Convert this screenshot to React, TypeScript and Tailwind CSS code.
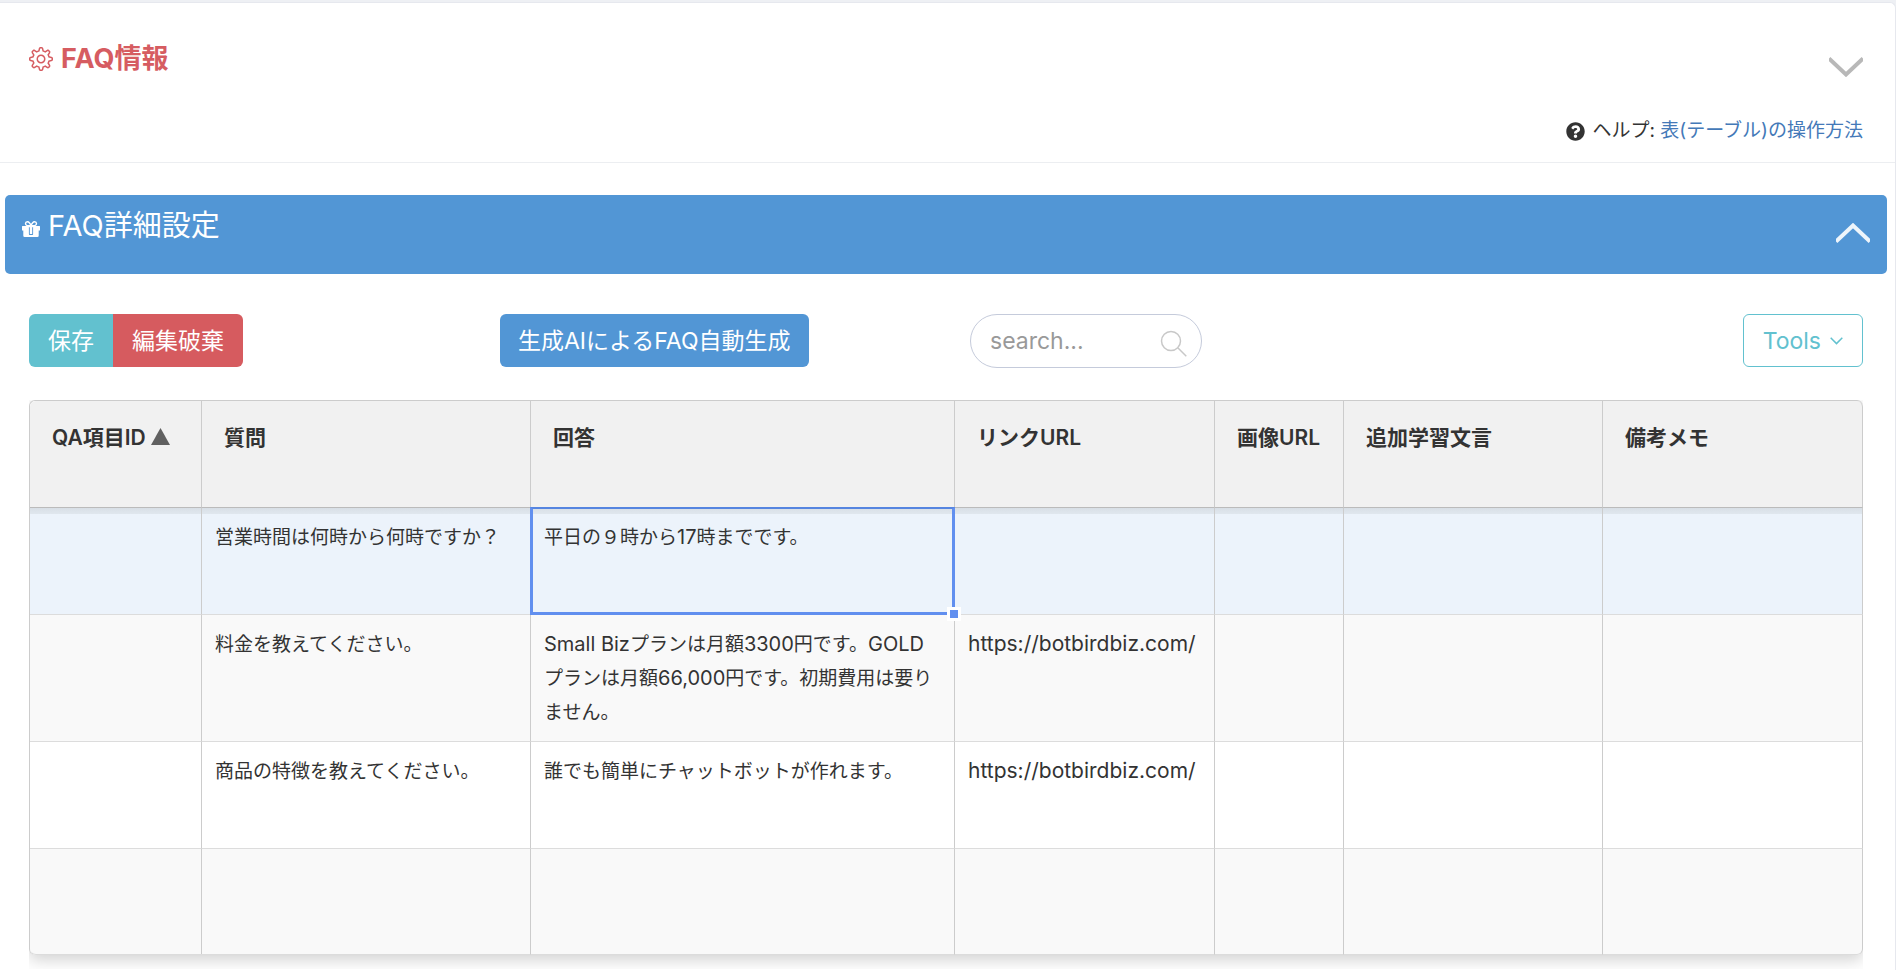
import { SlSettings } from "react-icons/sl";
import { FaQuestionCircle } from "react-icons/fa";

const columns = [
  { label: "QA項目ID", width: "w-[172px]", sorted: true },
  { label: "質問", width: "w-[329px]" },
  { label: "回答", width: "w-[424px]" },
  { label: "リンクURL", width: "w-[260px]" },
  { label: "画像URL", width: "w-[129px]" },
  { label: "追加学習文言", width: "w-[259px]" },
  { label: "備考メモ", width: "w-[260px]" },
];

const rows = [
  ["", "営業時間は何時から何時ですか？", "平日の９時から17時までです。", "", "", "", ""],
  [
    "",
    "料金を教えてください。",
    "Small Bizプランは月額3300円です。GOLDプランは月額66,000円です。初期費用は要りません。",
    "https://botbirdbiz.com/",
    "",
    "",
    "",
  ],
  ["", "商品の特徴を教えてください。", "誰でも簡単にチャットボットが作れます。", "https://botbirdbiz.com/", "", "", ""],
  ["", "", "", "", "", "", ""],
];

const rowColors = [
  "bg-[linear-gradient(to_bottom,#d8dfe6_0px,#e0e7ee_6px,#ecf3fb_6px)]",
  "bg-[#f9f9f9]",
  "bg-white",
  "bg-[#f9f9f9]",
];

function GiftIcon() {
  return (
    <svg viewBox="0 0 18 16" className="mt-[5px] h-4 w-[18px]" fill="currentColor" aria-hidden="true">
      <path
        fillRule="evenodd"
        d="M0 5.500Q0 5 .5 5H4.500Q2.800 4.500 2.800 2.600Q2.900 .2 5.400 .1Q7 .1 8 1.500L9 2.800L10 1.500Q11 .1 12.600 .1Q15.100 .2 15.200 2.600Q15.200 4.500 13.500 5H17.500Q18 5 18 5.500V9.500H16.700V14.700Q16.700 16 15.400 16H2.600Q1.300 16 1.300 14.700V9.500H0ZM5.400 1.400Q4.200 1.500 4.200 2.600Q4.200 3.900 5.400 3.900H8L6.800 2.200Q6.200 1.400 5.400 1.400ZM12.600 1.400Q11.800 1.400 11.200 2.200L10 3.900H12.600Q13.800 3.900 13.800 2.600Q13.800 1.500 12.600 1.400ZM6.900 6.300V13.300Q6.900 14 7.600 14H10.400Q11.100 14 11.100 13.300V6.300H10.200V13H7.800V6.300Z"
      />
    </svg>
  );
}

function Chevron({ up = false }: { up?: boolean }) {
  return (
    <svg viewBox="0 0 34 20" className="block h-5 w-[34px]" fill="none" stroke="currentColor" strokeWidth="4" aria-hidden="true">
      <path d={up ? "M0 18.500L17 2.500L34 18.500" : "M0 1.500L17 17.500L34 1.500"} />
    </svg>
  );
}

/* Latin letters and digits are set slightly larger to balance with the kanji. */
function CellText({ text }: { text: string }) {
  return text.split(/([!-~][ -~]*)/).map((part, i) =>
    i % 2 === 1 ? (
      <span key={i} className={part.startsWith("http") ? "text-[21px] leading-none" : "text-[20px] leading-none"}>
        {part}
      </span>
    ) : (
      part
    ),
  );
}

export default function App() {
  return (
    <div
      lang="ja"
      className="min-h-screen bg-[#eef0f4] pt-[2px] font-['Inter','Noto_Sans_CJK_JP',sans-serif] text-[19px] leading-[34px] text-[#333]"
    >
      <main className="min-h-[calc(100vh-2px)] rounded-tr-md border-t border-r border-[#e6e8ee] bg-white">
        <header className="flex h-[160px] items-start justify-between border-b border-[#eceef1] pr-8 pl-[29px]">
          <h1 className="flex items-center gap-2 pt-[39px] text-[27px] font-bold text-[#d65c61]">
            <SlSettings className="size-6" aria-hidden="true" />
            FAQ情報
          </h1>
          <div className="flex flex-col items-end gap-[37px] pt-[54px]">
            <button type="button" aria-label="FAQ情報を開く" className="text-[#b8b8b8]">
              <Chevron />
            </button>
            <p className="flex items-center">
              <FaQuestionCircle className="mr-[7px] size-[19px]" aria-hidden="true" />
              <span>ヘルプ:&nbsp;</span>
              <a href="#help" className="text-[#4479b8]">
                表(テーブル)の操作方法
              </a>
            </p>
          </div>
        </header>

        <section>
          <div className="mt-8 mr-2 ml-[5px] flex h-[79px] items-start justify-between rounded-[5px] bg-[#5296d5] px-[17px] text-white">
            <h2 className="flex items-center gap-2 pt-[14px] text-[29px] font-normal">
              <GiftIcon />
              FAQ詳細設定
            </h2>
            <button type="button" aria-label="FAQ詳細設定を閉じる" className="pt-7 text-white/90">
              <Chevron up />
            </button>
          </div>

          <div className="mt-10 grid grid-cols-[471fr_470fr_470fr_423fr] items-start pr-8 pl-[29px] text-[23px]">
            <div className="flex text-white">
              <button type="button" className="h-[53px] rounded-l-md bg-[#62c1cf] px-[19px]">
                保存
              </button>
              <button type="button" className="h-[53px] rounded-r-md bg-[#d65b5f] px-[19px]">
                編集破棄
              </button>
            </div>
            <button type="button" className="h-[53px] justify-self-start rounded-md bg-[#5296d5] px-[18px] text-white">
              生成AIによるFAQ自動生成
            </button>
            <div className="flex h-[54px] w-[232px] items-center rounded-full border border-[#c5cbdb] pr-[14px] pl-[19px]">
              <input
                type="text"
                aria-label="検索"
                placeholder="search..."
                className="h-[50px] w-0 min-w-0 flex-1 bg-transparent outline-none placeholder:text-[#999]"
              />
              <svg viewBox="0 0 27 27" className="mt-1 size-[27px]" fill="none" stroke="#c8c8c8" strokeWidth="1.5" aria-hidden="true">
                <circle cx="11" cy="11" r="9.500" />
                <path d="M18 18L26.300 26.300" />
              </svg>
            </div>
            <button
              type="button"
              className="flex h-[53px] items-center gap-[9px] justify-self-end rounded-md border border-[#62c1cf] px-[19px] text-[#62c1cf]"
            >
              Tools
              <svg viewBox="0 0 13 8" className="h-2 w-[13px]" fill="none" stroke="currentColor" strokeWidth="1.5" aria-hidden="true">
                <path d="M.7 .8L6.500 6.600L12.300 .8" />
              </svg>
            </button>
          </div>

          <div className="mt-8 mr-8 ml-[29px] overflow-hidden pb-[14px]">
            <table className="w-full table-fixed border-separate border-spacing-0 rounded-md border-t border-l border-[#ccc] shadow-[0_5px_16px_rgba(0,0,0,0.18)]">
              <thead>
                <tr className="h-[107px]">
                  {columns.map((column) => (
                    <th
                      key={column.label}
                      scope="col"
                      className={`${column.width} border-r border-b border-r-[#ccc] border-b-[#bbb] bg-[#f1f1f1] pt-5 pl-[22px] text-left align-top text-[21px] font-semibold whitespace-nowrap first:rounded-tl-md last:rounded-tr-md`}
                    >
                      {column.label}
                      {column.sorted && (
                        <svg viewBox="0 0 19 17" className="ml-[5px] inline-block h-[17px] w-[19px] align-[0px]" fill="#606060" aria-hidden="true">
                          <path d="M9.500 0L19 17H0Z" />
                        </svg>
                      )}
                    </th>
                  ))}
                </tr>
              </thead>
              <tbody>
                {rows.map((row, r) => (
                  <tr key={r} className="group h-[107px] last:h-[106px]">
                    {row.map((cell, c) => (
                      <td
                        key={c}
                        className={`${rowColors[r]} relative border-r border-b border-r-[#ccc] border-b-[#dcdcdc] pt-[13px] pr-4 pb-[11px] pl-[13px] align-top group-last:first:rounded-bl-md group-last:last:rounded-br-md`}
                      >
                        <CellText text={cell} />
                        {r === 0 && c === 2 && (
                          <>
                            <span className="pointer-events-none absolute -inset-px z-10 border-[3px] border-t-2 border-[#618fef] border-t-[#5685e0]" />
                            <span className="absolute -right-[7px] -bottom-[7px] z-20 size-[14px] cursor-crosshair border-[3px] border-white bg-[#618fef]" />
                          </>
                        )}
                      </td>
                    ))}
                  </tr>
                ))}
              </tbody>
            </table>
          </div>
        </section>
      </main>
    </div>
  );
}
